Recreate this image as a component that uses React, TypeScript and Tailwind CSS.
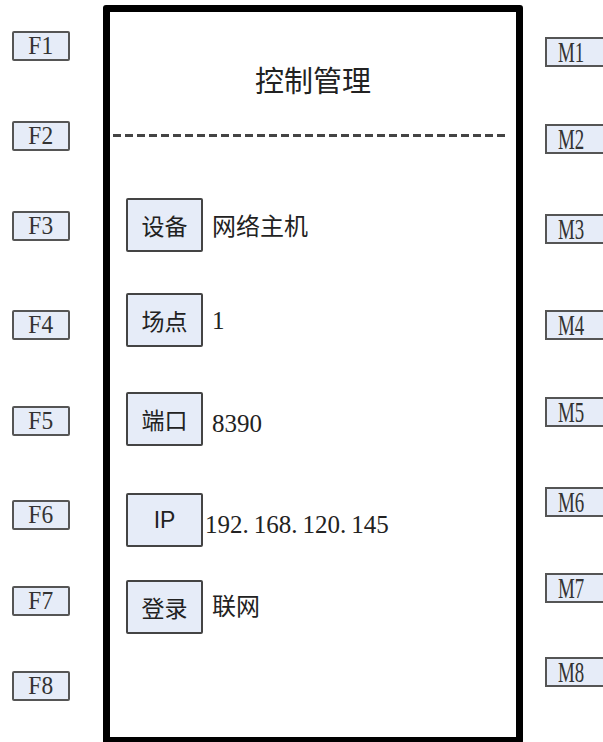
const cjk = "font-['Noto_Sans_CJK_SC',sans-serif]";
const serif = "font-['Liberation_Serif','Noto_Sans_CJK_SC',serif]";

const fKeys = [
  { label: "F1", cls: "mt-[31px]" },
  { label: "F2", cls: "mt-[60px]" },
  { label: "F3", cls: "mt-[60px]" },
  { label: "F4", cls: "mt-[69px]" },
  { label: "F5", cls: "mt-[66px]" },
  { label: "F6", cls: "mt-[64px]" },
  { label: "F7", cls: "mt-[56px]" },
  { label: "F8", cls: "mt-[55px]" },
];

const mKeys = [
  { label: "M1", cls: "mt-[37px]" },
  { label: "M2", cls: "mt-[57px]" },
  { label: "M3", cls: "mt-[60px]" },
  { label: "M4", cls: "mt-[66px]" },
  { label: "M5", cls: "mt-[57px]" },
  { label: "M6", cls: "mt-[60px]" },
  { label: "M7", cls: "mt-[56px]" },
  { label: "M8", cls: "mt-[54px]" },
];

type Row = {
  label: string;
  value: string;
  rowCls: string;
  labelFont: string;
  valueCls: string;
};

const rows: Row[] = [
  { label: "设备", value: "网络主机", rowCls: "mt-[61px]", labelFont: cjk, valueCls: `${cjk} text-[24px] ml-[9px]` },
  { label: "场点", value: "1", rowCls: "mt-[41px]", labelFont: cjk, valueCls: `${serif} text-[25px] ml-[9px]` },
  { label: "端口", value: "8390", rowCls: "mt-[45px]", labelFont: cjk, valueCls: `${serif} text-[25px] ml-[9px] mt-[8px]` },
  { label: "IP", value: "192.168.120.145", rowCls: "mt-[47px]", labelFont: "font-['Liberation_Sans',sans-serif]", valueCls: `${serif} text-[25px] ml-[2px] mt-[8px]` },
  { label: "登录", value: "联网", rowCls: "mt-[33px]", labelFont: cjk, valueCls: `${cjk} text-[24px] ml-[9px] -mt-[4px]` },
];

function IpText({ value }: { value: string }) {
  const parts = value.split(".");
  return (
    <>
      {parts.map((p, i) => (
        <span key={i}>
          {p}
          {i < parts.length - 1 && <span className="mr-[5px]">.</span>}
        </span>
      ))}
    </>
  );
}

export default function App() {
  return (
    <div className="w-[603px] h-[742px] overflow-hidden bg-white flex text-[#222]">
      <div className="w-[103px] shrink-0 flex flex-col pl-[12px]">
        {fKeys.map((k) => (
          <div
            key={k.label}
            className={`${k.cls} w-[58px] h-[30px] shrink-0 border-2 border-[#555] rounded-[2px] bg-[#e6ecf8] flex items-center justify-center ${serif} text-[26px] leading-none text-[#333]`}
          >
            <span className="inline-block scale-x-[0.9]">{k.label}</span>
          </div>
        ))}
      </div>

      <div className="w-[420px] h-[739px] mt-[5px] shrink-0 border-[7px] border-black rounded-[3px] flex flex-col">
        <div className={`mt-[53px] h-[28px] flex items-center justify-center ${cjk} text-[29px] leading-[28px]`}>
          控制管理
        </div>
        <div className="mt-[41px] ml-[3px] w-[395px] h-[3px] bg-[repeating-linear-gradient(90deg,#444_0_8px,transparent_8px_12px)]" />

        {rows.map((r) => (
          <div key={r.label} className={`${r.rowCls} flex items-center`}>
            <div
              className={`ml-[16px] w-[77px] h-[54px] shrink-0 border-2 border-[#444] rounded-[2px] bg-[#e6ecf8] flex items-center justify-center ${r.labelFont} text-[23px] leading-none`}
            >
              {r.label}
            </div>
            <div className={`${r.valueCls} leading-none whitespace-nowrap`}>
              {r.label === "IP" ? <IpText value={r.value} /> : r.value}
            </div>
          </div>
        ))}
      </div>

      <div className="shrink-0 flex flex-col pl-[22px]">
        {mKeys.map((k) => (
          <div
            key={k.label}
            className={`${k.cls} w-[60px] h-[30px] shrink-0 border-2 border-[#555] bg-[#e6ecf8] flex items-center pl-[11px] ${serif} text-[29px] leading-none text-[#333]`}
          >
            <span className="inline-block scale-x-[0.65] origin-left">{k.label}</span>
          </div>
        ))}
      </div>
    </div>
  );
}
